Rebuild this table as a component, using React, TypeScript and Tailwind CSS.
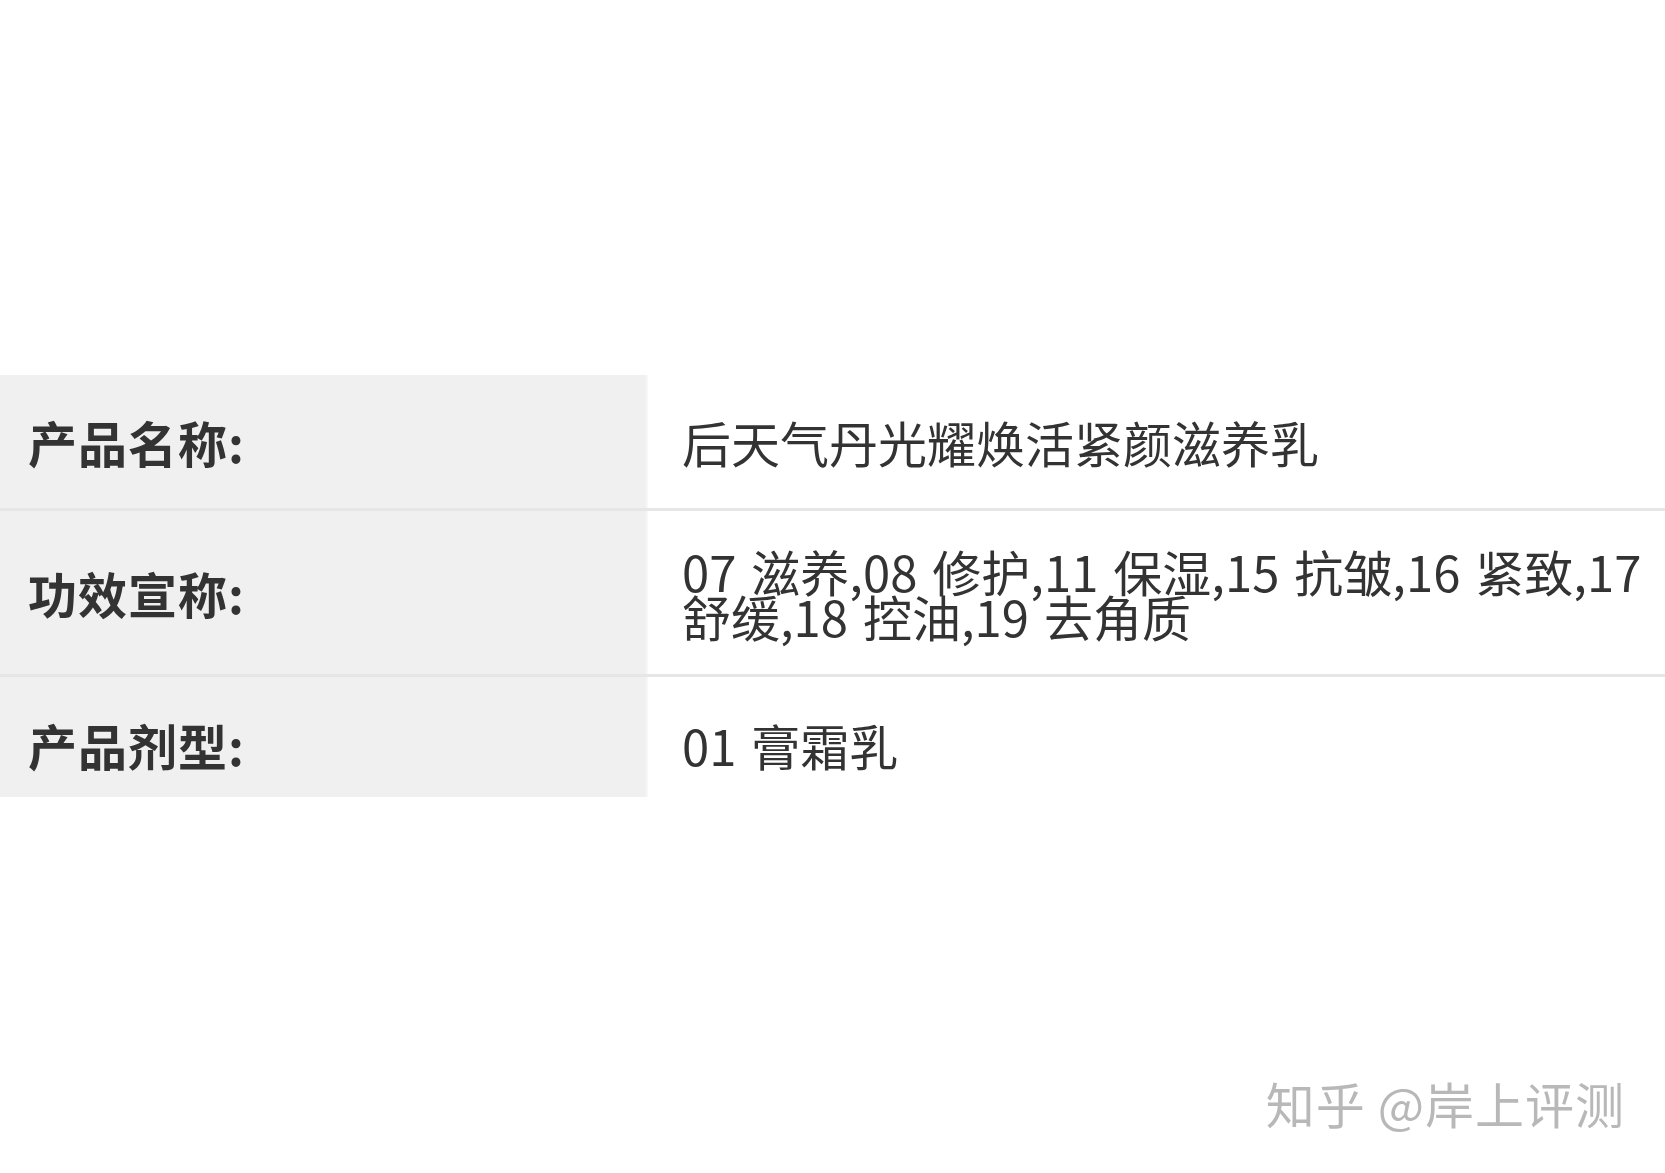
const rows = [
  { label: "产品名称:", value: ["后天气丹光耀焕活紧颜滋养乳"], height: "h-[136px]", pad: "" },
  {
    label: "功效宣称:",
    value: ["07 滋养,08 修护,11 保湿,15 抗皱,16 紧致,17", "舒缓,18 控油,19 去角质"],
    height: "h-[166px]",
    pad: "",
  },
  { label: "产品剂型:", value: ["01 膏霜乳"], height: "h-[120px]", pad: "pt-[14px]" },
];

export default function App() {
  return (
    <div className="w-[1665px] h-[1173px] bg-white flex flex-col font-['Microsoft_YaHei','Noto_Sans_CJK_SC',sans-serif] text-[#333]">
      <div className="h-[375px]" />
      <div className="flex flex-col">
        {rows.map((row, i) => (
          <div
            key={row.label}
            className={`flex ${row.height} ${i < rows.length - 1 ? "border-b-[3px] border-[#e6e6e6]" : ""}`}
          >
            <div className={`w-[648px] shrink-0 bg-[#f0f0f0] border-r-[2px] border-[#f7f7f7] flex items-center pl-[28px] ${row.pad}`}>
              <span className="text-[49px] font-bold leading-none tracking-[1px]">{row.label}</span>
            </div>
            <div className={`flex-1 flex flex-col justify-center pl-[34px] text-[49px] leading-[45px] [word-spacing:4px] ${row.pad}`}>
              {row.value.map((line) => (
                <div key={line} className="whitespace-nowrap">
                  {line}
                </div>
              ))}
            </div>
          </div>
        ))}
      </div>
      <div className="flex-1 flex items-end justify-end pr-[40px] pb-[34px]">
        <span className="text-[49px] text-[#b8b8b8] tracking-[1px]">知乎 @岸上评测</span>
      </div>
    </div>
  );
}
